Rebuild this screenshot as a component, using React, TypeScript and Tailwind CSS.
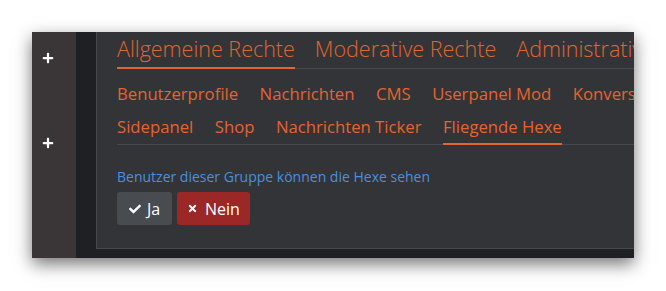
import React from "react";
import { FaPlus, FaCheck, FaTimes } from "react-icons/fa";

const font = { fontFamily: '"Segoe UI", "Open Sans", "Noto Sans", sans-serif' };

export default function App() {
  const row1 = ["Benutzerprofile", "Nachrichten", "CMS", "Userpanel Mod", "Konversationen"];
  const row2 = ["Sidepanel", "Shop", "Nachrichten Ticker", "Fliegende Hexe"];
  return (
    <div className="w-[666px] h-[291px] bg-white pt-[32px] pl-[32px]" style={font}>
      <div className="flex w-[602px] h-[226px] overflow-hidden shadow-[0_6px_16px_rgba(0,0,0,0.55)]">
        <div className="w-[44px] shrink-0 bg-[#3a3537] flex flex-col items-center pr-[12px]">
          <FaPlus className="text-white w-[12px] h-[12px] mt-[20px]" />
          <FaPlus className="text-white w-[12px] h-[12px] mt-[73px]" />
        </div>
        <div className="w-[20px] shrink-0 bg-[#1f2023]" />
        <div className="flex-1 min-w-0 bg-[#1f2023] pb-[9px]">
          <div className="h-full bg-[#333438] border-l border-b border-[#46484b] pl-[20px] overflow-hidden">
            <div className="flex whitespace-nowrap border-b border-[#46484b] mt-[1px]">
              <div className="text-[21.5px] font-light text-[#e0652f] leading-[32px] pb-[2px] border-b-2 border-[#e0652f] -mb-[1px] mr-[20px]">Allgemeine Rechte</div>
              <div className="text-[21.5px] font-light text-[#e0652f] leading-[32px] mr-[20px]">Moderative Rechte</div>
              <div className="text-[21.5px] font-light text-[#e0652f] leading-[32px]">Administrative Rechte</div>
            </div>
            <div className="border-b border-[#46484b] pt-[9px] text-[16.7px] text-[#e5632f] leading-[32.5px]">
              <div className="flex gap-[21.5px] whitespace-nowrap">
                {row1.map((t) => (
                  <span key={t}>{t}</span>
                ))}
              </div>
              <div className="flex gap-[21.5px] whitespace-nowrap">
                {row2.map((t, i) => (
                  <span key={t} className={i === 3 ? "border-b-2 border-[#e5632f] -mb-[1px]" : ""}>{t}</span>
                ))}
              </div>
            </div>
            <div className="text-[14px] text-[#4a90dc] mt-[22px] leading-[20px] whitespace-nowrap">Benutzer dieser Gruppe können die Hexe sehen</div>
            <div className="flex gap-[5px] mt-[5px]">
              <button className="h-[33px] w-[55px] bg-[#484c50] rounded-[3px] text-white text-[16px] flex items-center justify-center gap-[6px]">
                <FaCheck className="w-[12px] h-[12px]" />
                <span>Ja</span>
              </button>
              <button className="h-[33px] w-[73px] bg-[#9b2727] rounded-[3px] text-white text-[16px] flex items-center justify-center gap-[7px]">
                <FaTimes className="w-[11px] h-[11px]" />
                <span>Nein</span>
              </button>
            </div>
          </div>
        </div>
      </div>
    </div>
  );
}
